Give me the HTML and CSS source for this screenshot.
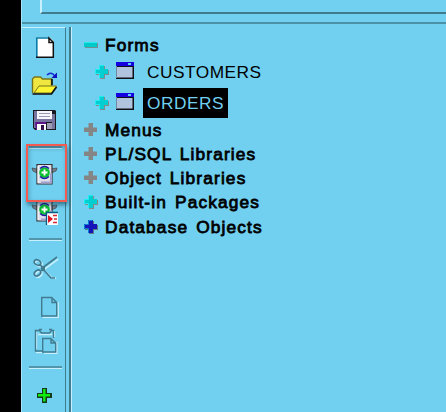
FILE: index.html
```html
<!DOCTYPE html>
<html lang="en">
<head>
<meta charset="utf-8">
<title>Object Navigator</title>
<link rel="stylesheet" href="styles.css">
</head>
<body>
<svg width="0" height="0" class="defs">
  <defs>
    <symbol id="plus" viewBox="0 0 16 16"><path class="shade" d="M6 2h5v4h4v5h-4v4H6v-4H2V6h4z"/><path class="face" d="M5 1h5v4h4v5h-4v4H5v-4H1V5h4z"/><path class="edge" d="M5.500 14V9.500H1.500V5.500H5.500V1.500H9.500"/></symbol>
    <symbol id="flatplus" viewBox="0 0 16 16"><path fill="#858585" d="M5.500 1h4.500v4.500h4v4.500h-4V14h-4.500v-4h-4.500v-4.500h4.500z"/></symbol>
    <symbol id="window" viewBox="0 0 18 17"><path fill="#101018" d="M0 0h18v17H0z"/><path fill="#6f8aa0" d="M0 4h1v12H0z"/><path fill="#b0c4de" d="M1 5h15.500v10.500H1z"/><path fill="#1500e0" d="M0 0h18v4H0z"/><path fill="#5ec8ff" d="M12 1h3v2h-3z"/></symbol>
  </defs>
</svg>
<div class="app">
  <header class="top"><div class="inset"></div></header>
  <main class="work">
    <nav class="toolbar">
      <svg width="40" height="38" viewBox="25 28 40 38"><path d="M36 37.500h14l4 4V58H36z" fill="#fff"/><path d="M36.800 57V38H49" fill="none" stroke="#087aa6" stroke-width="1.600"/><path d="M36 57.200h17.300V42.500H49V38l4.500 4.500" fill="none" stroke="#111" stroke-width="1.500"/></svg>
      <svg width="40" height="36" viewBox="25 66 40 36"><path d="M32.500 93V79l2-2h6l2 2h9v8" fill="#f0e640" stroke="#77751c" stroke-width="1.400"/><path d="M34 93l5-7h17.500l-5 7z" fill="#fbf432" stroke="#77751c"/><path d="M32.500 94H51.500l5-7M52 79v6" fill="none" stroke="#111" stroke-width="1.600"/><path d="M47 75q4-4 8 1" fill="none" stroke="#1828d0" stroke-width="1.500"/><path d="M57 72.500v5.500h-5.500z" fill="#1010c0"/></svg>
      <svg width="40" height="41" viewBox="25 102 40 41"><path d="M33 110h22l1 1v19H35l-2-2z" fill="#181820"/><path d="M34 111h3v17h-3zM52 114h3v15h-3zM37 119h16v3H37z" fill="#7775a0"/><path d="M37 111h15v8H37z" fill="#f6f6fc"/><path d="M39 113.500h11M39 116.500h11" stroke="#9999b0"/><path d="M35 122h11v8H36z" fill="#5c1688"/><path d="M37 124h9v6h-9z" fill="#fff"/><path d="M41 125h3v5h-3z" fill="#35104d"/><path d="M47 123h5v6h-5z" fill="#9c9cb5"/></svg>
      <div class="sep"></div>
      <svg width="40" height="46" viewBox="25 150 40 46">
        <g id="run"><path d="M32 168l5 1v4l-4-2zM57 168l-6 1v4l5-2z" fill="#73808a" stroke="#46515a" stroke-width=".8"/><path d="M37 164.500h15V184H37z" fill="#dedeee" stroke="#333" stroke-width="1.200"/><path d="M38 183V166" stroke="#fff"/><path d="M41 182.500h10v-9" fill="none" stroke="#a0a0ca" stroke-width="2"/><circle cx="44.500" cy="172.500" r="5.300" fill="#08c030"/><path d="M40 168.500q4.500-4 9 0M40 176.500q4.500 4 9 0" fill="none" stroke="#1717a0" stroke-width="1.200"/><path d="M41.500 172.500h6M44.500 169.500v6" stroke="#fff" stroke-width="1.800"/></g></svg>
      <svg width="40" height="39" viewBox="25 196 40 39"><use href="#run" y="37"/><path d="M46 212h12v13H46z" fill="#fff"/><path d="M46.500 225v-12.500H58" fill="none" stroke="#075a82" stroke-width="1.300"/><path d="M48 215l5 4-5 4z" fill="#e01020"/><path d="M53 215.500h4M54 219h3M53 222.500h4" stroke="#d52835" stroke-width="1.400"/></svg>
      <div class="sep"></div>
      <svg width="40" height="47" viewBox="25 242 40 47"><g fill="none" stroke="#407b90" stroke-width="1.600"><g stroke="#c9f0ff" transform="translate(1.200 1.200)"><path d="M42 269l15-11M41 267l10 10h4"/><ellipse cx="37.500" cy="262.500" rx="3.500" ry="2.500" transform="rotate(30 37.500 262.500)"/><ellipse cx="37.500" cy="273" rx="3.500" ry="2.500" transform="rotate(-35 37.500 273)"/></g><path d="M41 269l16-12M40 264l3 5 8 9h4"/><ellipse cx="37.500" cy="262.500" rx="3.500" ry="2.500" transform="rotate(30 37.500 262.500)"/><ellipse cx="37.500" cy="273" rx="3.500" ry="2.500" transform="rotate(-35 37.500 273)"/><path d="M41 266h4v5h-4z" fill="#407b90" stroke="none"/></g></svg>
      <svg width="40" height="33" viewBox="25 289 40 33"><g fill="none" stroke-width="1.400"><path d="M42.700 317.200h15.500V302" stroke="#c9f0ff"/><path d="M41.700 297.500h10l5 5V316h-15zM52 297.500v5h4.500" stroke="#407b90"/></g></svg>
      <svg width="40" height="41" viewBox="25 322 40 41"><g fill="none" stroke-width="1.400"><path d="M36.500 349V332M54.500 331v6M38 334.500h14M36 352.500h6M44 353.200h12.800V342" stroke="#c9f0ff"/><path d="M42 351h-6.500V330.500h4l2 2.500h8l2-2.500h2V338M39 329.500h3M49 329.500h3M42.700 338.500h8l5 4.500v9H42.700zM51 338.500v4.500h4.500" stroke="#407b90"/></g></svg>
      <div class="sep"></div>
      <svg width="40" height="42" viewBox="25 370 40 42"><path d="M42 388h5v5h5v5h-5v5h-5v-5h-5v-5h5z" fill="#163b18"/><path d="M38 395.300h12M44.300 389v12.500" stroke="#10ed10" stroke-width="2.400"/></svg>
      <div class="highlight"></div>
    </nav>
    <section class="tree">
      <div class="row root"><svg class="minus" width="16" height="16" viewBox="0 0 16 16"><path d="M2 6h13v5H2z" fill="#718f91"/><path d="M1 5h13v5H1z" fill="#00c9c9"/><path d="M1 5.500h13" stroke="#28e8ee"/></svg><span>Forms</span></div>
      <div class="row child"><svg class="cyan" width="16" height="16"><use href="#plus"/></svg><svg class="win" width="18" height="17"><use href="#window"/></svg><span class="label">CUSTOMERS</span></div>
      <div class="row child"><svg class="cyan" width="16" height="16"><use href="#plus"/></svg><svg class="win" width="18" height="17"><use href="#window"/></svg><span class="label selected">ORDERS</span></div>
      <div class="row"><svg width="16" height="16"><use href="#flatplus"/></svg><span>Menus</span></div>
      <div class="row"><svg width="16" height="16"><use href="#flatplus"/></svg><span>PL/SQL Libraries</span></div>
      <div class="row"><svg width="16" height="16"><use href="#flatplus"/></svg><span>Object Libraries</span></div>
      <div class="row"><svg class="cyan" width="16" height="16"><use href="#plus"/></svg><span>Built-in Packages</span></div>
      <div class="row"><svg class="blue" width="16" height="16"><use href="#plus"/></svg><span>Database Objects</span></div>
    </section>
  </main>
</div>
</body>
</html>
```
FILE: styles.css
```css
* { box-sizing: border-box; }
body { margin: 0; width: 446px; height: 412px; overflow: hidden; background: #000; font-family: "Liberation Sans", Arial, sans-serif; }
.defs { position: absolute; }
.app { margin-left: 21px; height: 412px; display: flex; flex-direction: column; background: #71cfef; border-left: 1px solid #a9e4f8; }
.top { height: 24px; flex: none; border-bottom: 2px solid #4b91a8; padding-left: 18px; }
.inset { height: 14px; border-left: 2px solid #c9f0ff; border-bottom: 2px solid #3f7c90; }
.work { margin-top: 3px; height: 385px; display: flex; }
.toolbar { position: relative; width: 44px; flex: none; padding-left: 3px; border-top: 1px solid #c9f0ff; border-right: 1px solid #407b90; display: flex; flex-direction: column; }
.toolbar svg { display: block; flex: none; }
.sep { flex: none; width: 33px; height: 7px; margin-left: 4px; background: linear-gradient(#5595ab, #5595ab) 0 3px / 100% 2px no-repeat, linear-gradient(#c9f0ff, #c9f0ff) 0 5px / 100% 1px no-repeat; }
.highlight { position: absolute; left: 4px; top: 116px; width: 41px; height: 58px; border: 2px solid #f35a50; box-shadow: 1px 3px 4px rgba(20, 65, 85, .6), inset 1px 2px 4px rgba(20, 65, 85, .35); }
.tree { flex: 1; margin-left: 3px; border-left: 2px solid #407b90; box-shadow: inset 1px 0 #c9f0ff; padding: 6px 0 0 12px; }
.row { height: 24.1px; display: flex; align-items: center; white-space: nowrap; font-size: 17.3px; line-height: 24px; letter-spacing: 1.15px; word-spacing: 2px; color: #000; -webkit-text-stroke: .8px #000; }
.row > svg { flex: none; }
.row > span { margin-left: 6px; }
.child { height: 30.5px; padding-left: 11px; letter-spacing: .5px; -webkit-text-stroke: 0; }
.child .win { margin: -3px 0 0 6px; }
.child > .label { margin-left: 9px; padding: 0 4px; height: 30px; line-height: 30px; }
.child > .selected { background: #000; color: #71cfef; }
.cyan { --face: #00ced1; --edge: #21edf5; --shade: #808b8d; }
.blue { --face: #1414b8; --edge: #087ed0; --shade: #5b7983; }
.face { fill: var(--face); }
.shade { fill: var(--shade); }
.edge { fill: none; stroke: var(--edge); }
```
